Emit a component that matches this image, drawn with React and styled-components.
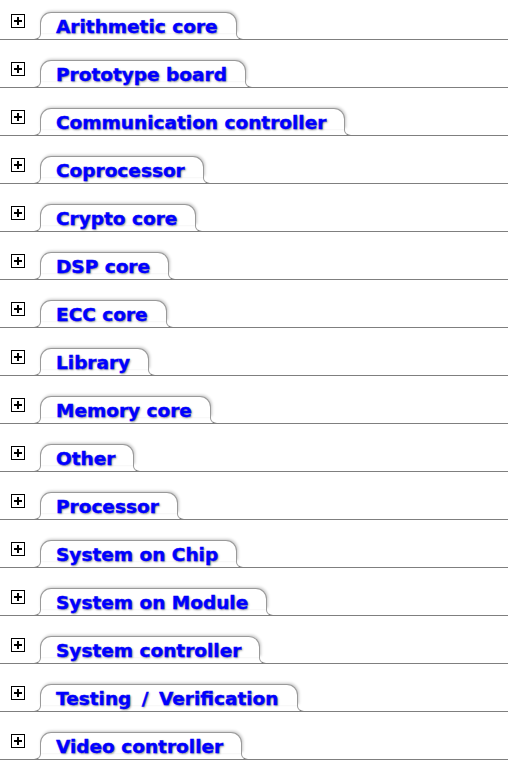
import styled, { createGlobalStyle } from "styled-components";

const GlobalStyle = createGlobalStyle`
  html, body {
    margin: 0;
    padding: 0;
    background: #ffffff;
  }
`;

const List = styled.div`
  display: flex;
  flex-direction: column;
  gap: 8px;
  width: 100%;
`;

const Row = styled.div`
  display: flex;
  align-items: flex-end;
  height: 40px;
  box-sizing: border-box;
  padding-left: 11px;
  border-bottom: 1px solid #7f7f7f;
`;

const Toggle = styled.span`
  position: relative;
  align-self: flex-start;
  margin-top: 14px;
  width: 14px;
  height: 14px;
  box-sizing: border-box;
  border: 1px solid #000000;
  background: #ffffff;
  flex-shrink: 0;

  &::before,
  &::after {
    content: "";
    position: absolute;
    background: #000000;
  }

  &::before {
    left: 2px;
    right: 2px;
    top: 5px;
    height: 2px;
  }

  &::after {
    top: 2px;
    bottom: 2px;
    left: 5px;
    width: 2px;
  }
`;

const Tab = styled.div`
  position: relative;
  height: 21px;
  box-sizing: border-box;
  margin: 0 0 6px 15px;
  padding: 0 18px 0 15px;
  border: 1px solid #9a9a9a;
  border-bottom: none;
  border-radius: 11px 11px 0 0;
  background: #ffffff;
  box-shadow: 1px -1px 3px rgba(0, 0, 0, 0.22);

  &::before,
  &::after {
    content: "";
    position: absolute;
    top: 100%;
    width: 7px;
    height: 6px;
    border-bottom: 1px solid #7f7f7f;
  }

  &::before {
    left: -8px;
    border-right: 1px solid #9a9a9a;
    border-bottom-right-radius: 7px 6px;
  }

  &::after {
    right: -8px;
    border-left: 1px solid #9a9a9a;
    border-bottom-left-radius: 7px 6px;
  }
`;

const Label = styled.a`
  display: block;
  font-family: "DejaVu Sans", Verdana, sans-serif;
  font-weight: bold;
  font-size: 18.5px;
  line-height: 27px;
  word-spacing: ${({ $spacing }) => $spacing || 0}px;
  color: #0000ff;
  -webkit-text-stroke: 0.4px #0000ff;
  text-decoration: none;
  white-space: nowrap;
  text-shadow: 1px 1px 2px rgba(0, 0, 0, 0.45);
`;

const categories = [
  { name: "Arithmetic core" },
  { name: "Prototype board" },
  { name: "Communication controller" },
  { name: "Coprocessor" },
  { name: "Crypto core" },
  { name: "DSP core" },
  { name: "ECC core" },
  { name: "Library" },
  { name: "Memory core" },
  { name: "Other" },
  { name: "Processor" },
  { name: "System on Chip" },
  { name: "System on Module" },
  { name: "System controller" },
  { name: "Testing / Verification", spacing: 4 },
  { name: "Video controller" },
];

export default function App() {
  return (
    <>
      <GlobalStyle />
      <List>
        {categories.map(({ name, spacing }) => (
          <Row key={name}>
            <Toggle />
            <Tab>
              <Label href="#" $spacing={spacing}>
                {name}
              </Label>
            </Tab>
          </Row>
        ))}
      </List>
    </>
  );
}
